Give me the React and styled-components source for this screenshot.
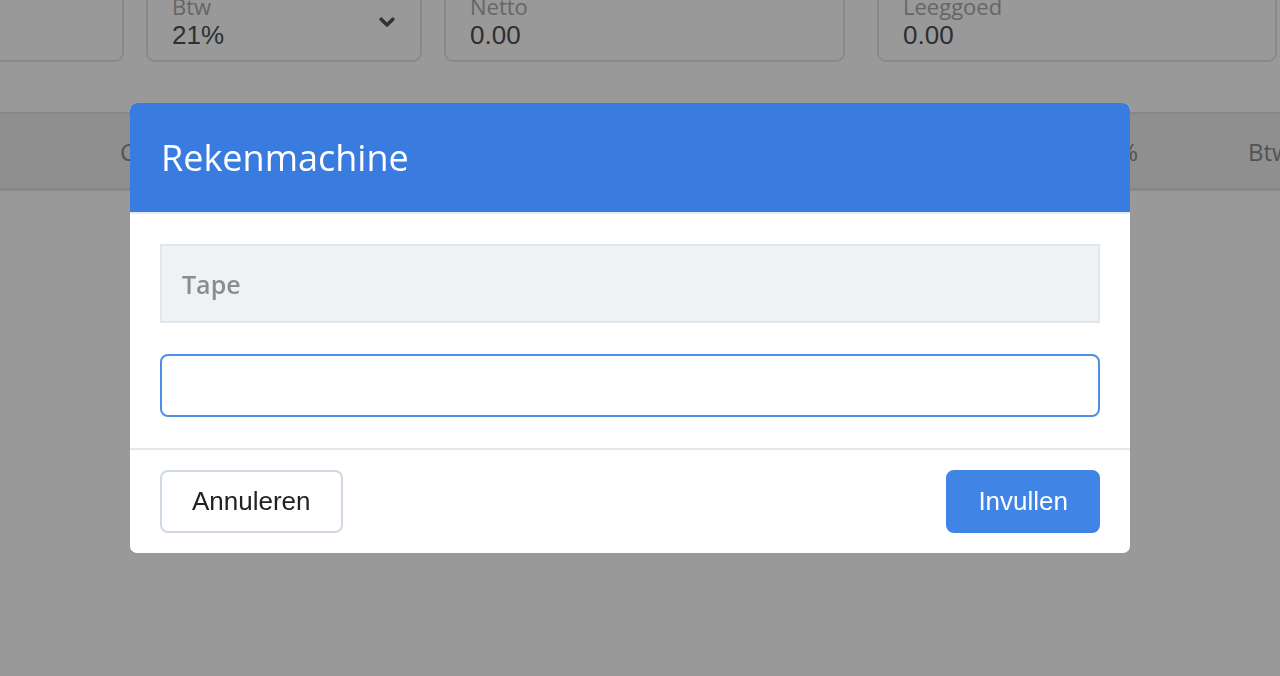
import React from 'react'
import styled, { createGlobalStyle } from 'styled-components'

const GlobalStyle = createGlobalStyle`
   html, body {
      margin: 0;
      padding: 0;
      background: #ffffff;
      overflow: hidden;
   }
   * {
      box-sizing: border-box;
   }
`

const fields = [
   { id: 1, label: 'Bedrag', value: '', width: 300 },
   { id: 2, label: 'Btw', value: '21%', width: 276, select: true },
   { id: 3, label: 'Netto', value: '0.00', width: 401 },
   { id: 4, label: 'Leeggoed', value: '0.00', width: 400, wide: true },
]

const Chevron = () => (
   <svg width="16" height="11" viewBox="0 0 16 11">
      <path
         d="M2.2 2.2 L8 8 L13.8 2.2"
         fill="none"
         stroke="#555"
         strokeWidth="3.6"
         strokeLinecap="round"
         strokeLinejoin="round"
      />
   </svg>
)

export default function App() {
   return (
      <>
         <GlobalStyle />
         <Page>
            <FieldRow>
               {fields.map((field) => (
                  <FieldBox key={field.id} $width={field.width} $wide={field.wide}>
                     <FieldText>
                        <FieldLabel>{field.label}</FieldLabel>
                        <FieldValue>{field.value || '\u00a0'}</FieldValue>
                     </FieldText>
                     {field.select && <Chevron />}
                  </FieldBox>
               ))}
            </FieldRow>
            <TableHead>
               <HeadCell>Code</HeadCell>
               <HeadCell $right>Btw %</HeadCell>
               <HeadCell $last>Btw bedrag</HeadCell>
            </TableHead>
         </Page>

         <Overlay>
            <Modal>
               <ModalHeader>
                  <ModalTitle>Rekenmachine</ModalTitle>
               </ModalHeader>
               <ModalBody>
                  <Tape>Tape</Tape>
                  <CalcInput autoFocus />
               </ModalBody>
               <ModalFooter>
                  <CancelButton>Annuleren</CancelButton>
                  <SubmitButton>Invullen</SubmitButton>
               </ModalFooter>
            </Modal>
         </Overlay>
      </>
   )
}

const Page = styled.div`
   width: 1280px;
   height: 676px;
   overflow: hidden;
   background: #ffffff;
`

const FieldRow = styled.div`
   display: flex;
   gap: 22px;
   margin-top: -19px;
   margin-left: -176px;
`

const FieldBox = styled.div`
   flex: 0 0 ${(p) => p.$width}px;
   margin-left: ${(p) => (p.$wide ? '10px' : '0')};
   height: 81px;
   display: flex;
   align-items: center;
   justify-content: space-between;
   padding: 12px 25px 10px 24px;
   border: 2px solid #dfe6ed;
   border-radius: 9px;
`

const FieldText = styled.div`
   display: flex;
   flex-direction: column;
   align-self: flex-start;
`

const FieldLabel = styled.div`
   font-family: 'Open Sans', sans-serif;
   font-size: 22px;
   line-height: 23px;
   color: #aaaaaa;
`

const FieldValue = styled.div`
   font-family: 'Liberation Sans', Arial, sans-serif;
   font-size: 26px;
   line-height: 35px;
   color: #4a4f55;
`

const TableHead = styled.div`
   margin-top: 50px;
   height: 79px;
   display: grid;
   grid-template-columns: 900px 118px 240px;
   align-items: center;
   padding-left: 120px;
   background: #eeeeee;
   border-top: 2px solid #e2e2e2;
   border-bottom: 3px solid #e2e2e2;
   overflow: hidden;
   white-space: nowrap;
`

const HeadCell = styled.div`
   font-family: 'Open Sans', sans-serif;
   font-size: 24px;
   color: #8a8a8a;
   text-align: ${(p) => (p.$right ? 'right' : 'left')};
   padding-left: ${(p) => (p.$last ? '110px' : '0')};
`

const Overlay = styled.div`
   position: fixed;
   inset: 0;
   background: rgba(0, 0, 0, 0.4);
   padding: 103px 0 0 130px;
`

const Modal = styled.div`
   width: 1000px;
   background: #ffffff;
   border-radius: 7px;
   overflow: hidden;
`

const ModalHeader = styled.div`
   height: 111px;
   display: flex;
   align-items: center;
   padding: 0 31px;
   background: #3a7be0;
   border-bottom: 2px solid #e6ebf0;
`

const ModalTitle = styled.h1`
   margin: 0;
   font-family: 'Open Sans', sans-serif;
   font-size: 36px;
   font-weight: 400;
   color: #ffffff;
`

const ModalBody = styled.div`
   display: flex;
   flex-direction: column;
   gap: 31px;
   padding: 30px 30px 31px;
   border-bottom: 2px solid #e3e8ee;
`

const Tape = styled.div`
   height: 79px;
   display: flex;
   align-items: center;
   padding-left: 20px;
   background: #eef2f5;
   border: 2px solid #dfe6ec;
   font-family: 'Open Sans', sans-serif;
   font-size: 25px;
   font-weight: 600;
   color: #8c8c8c;
`

const CalcInput = styled.input`
   height: 63px;
   width: 100%;
   padding: 0 20px;
   border: 2px solid #4d8fe6;
   border-radius: 8px;
   outline: none;
   font-family: 'Liberation Sans', Arial, sans-serif;
   font-size: 26px;
`

const ModalFooter = styled.div`
   display: flex;
   justify-content: space-between;
   padding: 20px 30px;
`

const Button = styled.button`
   height: 63px;
   padding: 0 30px;
   border-radius: 8px;
   font-family: 'Liberation Sans', Arial, sans-serif;
   font-size: 26px;
   cursor: pointer;
`

const CancelButton = styled(Button)`
   background: #ffffff;
   border: 2px solid #cfd9e3;
   color: #222222;
`

const SubmitButton = styled(Button)`
   background: #4084e6;
   border: 2px solid #4084e6;
   color: #ffffff;
`
